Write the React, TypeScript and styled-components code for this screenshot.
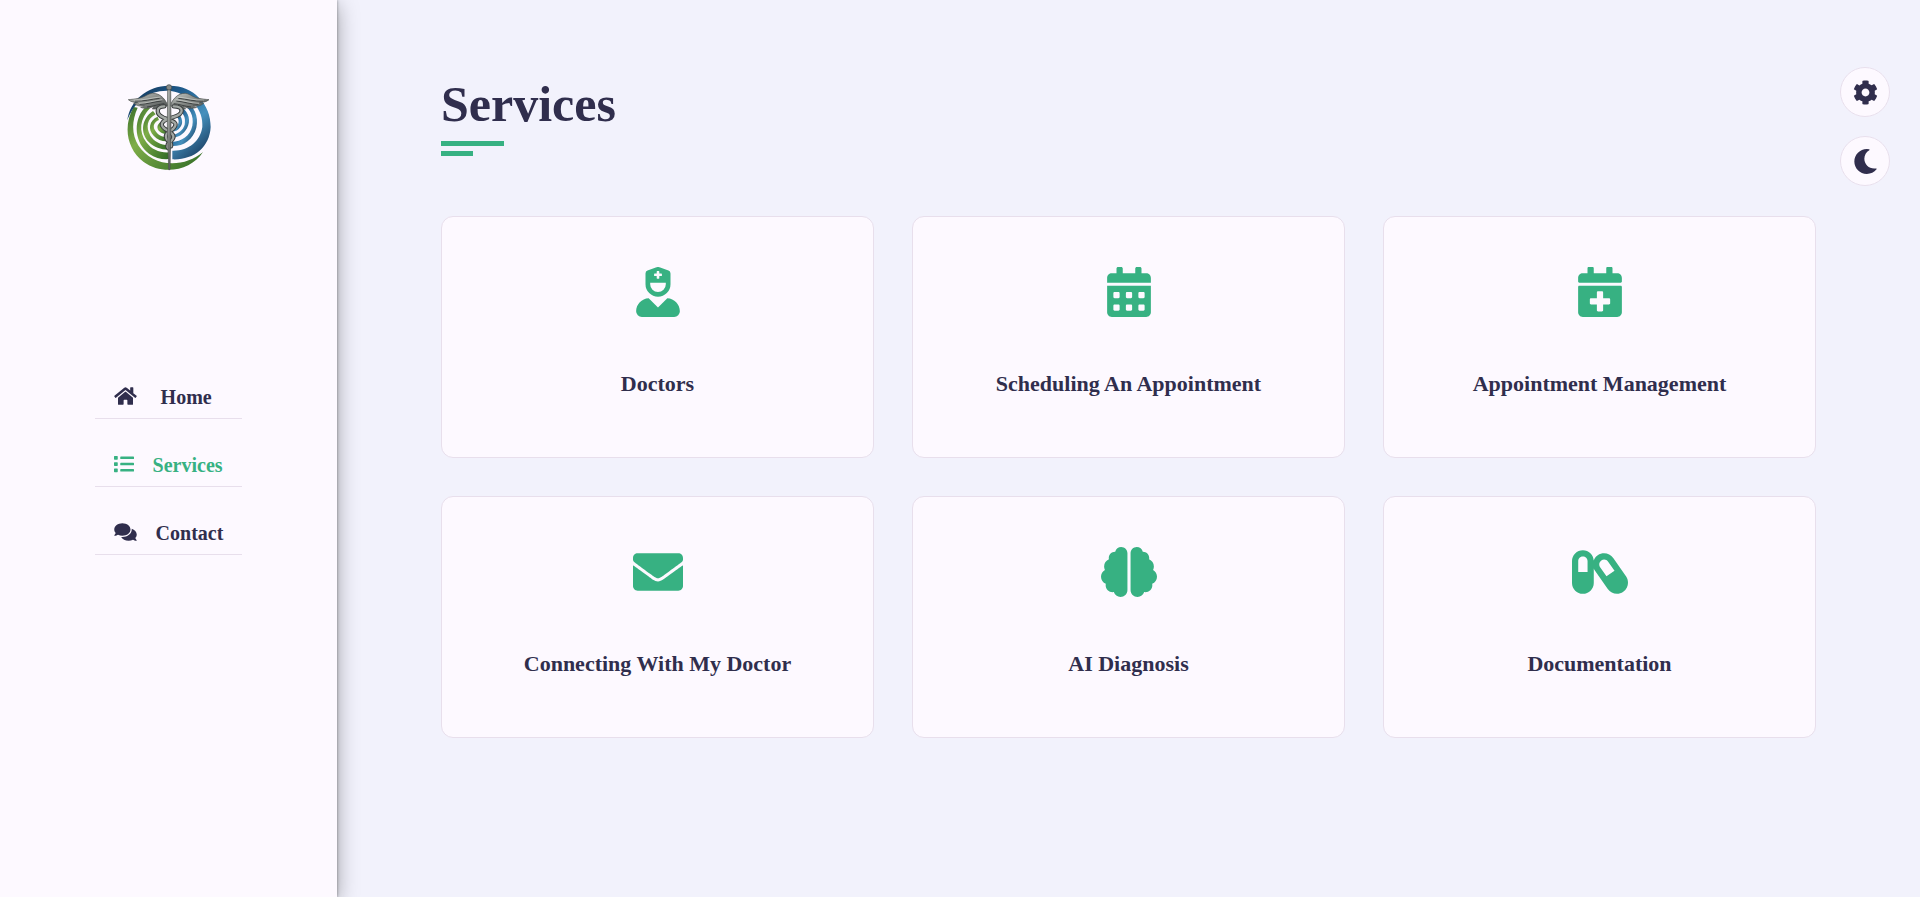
import React from 'react';
import styled, { createGlobalStyle } from 'styled-components';
import {
  FaBrain,
  FaCalendarAlt,
  FaCalendarPlus,
  FaCapsules,
  FaCog,
  FaComments,
  FaEnvelope,
  FaHome,
  FaList,
  FaMoon,
  FaUserNurse,
} from 'react-icons/fa';

const color = {
  page: '#f2f2fc',
  panel: '#fdf9ff',
  line: '#e8dfec',
  text: '#302e4d',
  accent: '#37b182',
};

const GlobalStyle = createGlobalStyle`
  * {
    box-sizing: border-box;
    margin: 0;
    padding: 0;
  }
  body {
    background: ${color.page};
    color: ${color.text};
    font-family: 'Liberation Serif', 'Times New Roman', serif;
  }
`;

const Page = styled.div`
  display: flex;
  min-height: 100vh;
`;

const Sidebar = styled.aside`
  flex: 0 0 337px;
  display: flex;
  flex-direction: column;
  align-items: center;
  gap: 205px;
  padding: 82px 20px 40px;
  background: ${color.panel};
  box-shadow:
    0 0 3px rgba(0, 0, 0, 0.4),
    0 5px 20px rgba(0, 0, 0, 0.35);
`;

const LogoLink = styled.a`
  display: block;
  height: 90px;
`;

const NavList = styled.ul`
  display: flex;
  flex-direction: column;
  gap: 26px;
  list-style: none;
`;

const NavLink = styled.a<{ $active?: boolean; $wide?: boolean }>`
  display: flex;
  align-items: flex-start;
  gap: 19px;
  padding: 9px 19px;
  border-bottom: 1px solid ${color.line};
  color: ${(p) => (p.$active ? color.accent : color.text)};
  font-size: 20px;
  line-height: 23px;
  font-weight: 700;
  text-decoration: none;
  white-space: pre;

  svg {
    height: 20px;
    width: ${(p) => (p.$wide ? 23 : 20)}px;
  }
`;

const Main = styled.main`
  flex: 1;
  min-width: 0;
  padding: 75px 104px 60px;
`;

const Title = styled.h1`
  font-size: 50px;
  line-height: 58px;
  font-weight: 700;
`;

const Underline = styled.div`
  display: flex;
  flex-direction: column;
  gap: 5px;
  margin-top: 8px;
`;

const Bar = styled.span<{ $short?: boolean }>`
  width: ${(p) => (p.$short ? 32 : 63)}px;
  height: 5px;
  background: ${color.accent};
`;

const Grid = styled.section`
  display: grid;
  grid-template-columns: repeat(3, 1fr);
  gap: 38px;
  margin-top: 60px;
`;

const Card = styled.article<{ $wide?: boolean }>`
  display: flex;
  flex-direction: column;
  align-items: center;
  gap: 54px;
  padding: 50px 20px 61px;
  border: 1px solid ${color.line};
  border-radius: 12px;
  background: ${color.panel};
  text-align: center;

  svg {
    height: 50px;
    width: ${(p) => (p.$wide ? 56 : 50)}px;
    color: ${color.accent};
  }
`;

const CardTitle = styled.h2`
  font-size: 22px;
  line-height: 25px;
  font-weight: 700;
`;

const Tools = styled.div`
  position: fixed;
  top: 67px;
  right: 30px;
  display: flex;
  flex-direction: column;
  gap: 19px;
`;

const ToolButton = styled.button`
  display: flex;
  align-items: center;
  justify-content: center;
  width: 50px;
  height: 50px;
  border: 1px solid ${color.line};
  border-radius: 50%;
  background: ${color.panel};
  color: ${color.text};
  font-size: 25px;
  cursor: pointer;
`;

const Logo = () => (
  <svg width="90" height="90" viewBox="43 37 270 270" role="img" aria-label="Clinic logo">
    <defs>
      <linearGradient id="green" x1="0" y1="0" x2="1" y2="1">
        <stop offset="0" stopColor="#3b6f2c" />
        <stop offset="0.35" stopColor="#7fae48" />
        <stop offset="1" stopColor="#2f6a26" />
      </linearGradient>
      <linearGradient id="blue" x1="0" y1="0" x2="1" y2="1">
        <stop offset="0" stopColor="#12304f" />
        <stop offset="0.35" stopColor="#1f5b8c" />
        <stop offset="0.65" stopColor="#4590bd" />
        <stop offset="1" stopColor="#10294a" />
      </linearGradient>
      <linearGradient id="metal" x1="0" y1="0" x2="1" y2="1">
        <stop offset="0" stopColor="#c4c8c3" />
        <stop offset="0.5" stopColor="#858986" />
        <stop offset="1" stopColor="#454949" />
      </linearGradient>
    </defs>
    <g fill="url(#green)">
      <path d="M72 112C40 168 50 238 102 277C160 319 246 302 280 247C240 282 176 292 130 267C76 238 54 180 84 114Z" />
      <path d="M104 116C68 156 76 222 118 252C138 266 158 270 180 268L180 248C150 250 126 240 110 218C86 184 90 148 122 114Z" />
      <path d="M130 124C96 146 90 190 118 218C134 234 156 241 180 240L180 226C154 227 134 216 122 198C108 172 112 148 138 134Z" />
      <path d="M144 141C118 152 114 180 132 198C144 211 160 216 178 214L178 203C158 204 144 196 136 182C128 168 134 157 148 151Z" />
      <path d="M154 157C142 163 140 176 149 185C157 192 166 194 176 192L175 184C162 186 154 176 160 165Z" />
    </g>
    <g fill="url(#blue)">
      <path d="M53 152C60 94 112 47 180 48C252 48 304 104 303 172C300 234 250 272 188 269L188 243C238 244 272 214 278 172C282 122 244 74 184 64C122 58 74 94 53 152Z" />
      <path d="M222 92C254 106 268 142 260 174C250 210 222 230 186 229L186 217C216 215 242 198 248 168C254 138 240 112 214 102Z" />
      <path d="M218 114C238 128 244 154 232 176C222 194 206 204 186 205L186 196C204 194 220 182 225 165C229 144 222 132 208 122Z" />
      <path d="M206 132C219 144 221 160 212 172C206 181 198 186 186 186L186 178C198 176 206 168 207 156C207 148 204 143 198 139Z" />
    </g>
    <g fill="url(#metal)" stroke="#4a4e4c" strokeWidth="2">
      <path d="M171 100C158 74 134 64 112 76C94 87 76 88 56 90C64 97 74 98 84 98C80 100 76 101 72 101C82 110 94 110 104 108C101 111 97 112 93 113C108 119 122 115 134 110L128 118C148 120 164 112 174 108Z" />
      <path d="M185 100C198 74 222 64 242 76C260 87 278 88 298 90C290 97 280 98 270 98C274 100 278 101 282 101C272 110 260 110 250 108C253 111 257 112 261 113C246 119 232 115 220 110L228 118C208 120 192 112 182 108Z" />
    </g>
    <g fill="none" stroke="#3e4242" strokeWidth="3">
      <path d="M76 94C102 96 126 88 150 86M90 104C112 104 134 96 156 94M112 112C132 110 148 103 164 102" />
      <path d="M280 94C254 96 230 88 206 86M266 104C244 104 222 96 200 94M244 112C224 110 208 103 192 102" />
    </g>
    <g fill="none" stroke="#d3d6d2" strokeWidth="2">
      <path d="M72 91C100 93 126 84 152 82M88 101C112 101 134 92 158 90" />
      <path d="M282 91C256 93 230 84 204 82M268 101C244 101 222 92 198 90" />
    </g>
    <g fill="none" stroke="#3b3f3f" strokeWidth="13" strokeLinecap="round">
      <path d="M164 110C138 110 138 134 162 144C188 154 208 158 192 176C178 188 164 192 170 206C174 216 188 218 184 230" />
      <path d="M192 110C226 110 222 134 192 142C162 150 144 162 166 178C188 190 200 200 184 214C172 222 172 230 176 236" />
    </g>
    <g fill="none" stroke="#a3a8a4" strokeWidth="7" strokeLinecap="round">
      <path d="M164 110C138 110 138 134 162 144C188 154 208 158 192 176C178 188 164 192 170 206C174 216 188 218 184 230" />
      <path d="M192 110C226 110 222 134 192 142C162 150 144 162 166 178C188 190 200 200 184 214C172 222 172 230 176 236" />
    </g>
    <path d="M174 58L183 58L184 160L181 300L177 300L173 160Z" fill="url(#metal)" stroke="#4a4e4c" strokeWidth="2" />
    <circle cx="178" cy="53" r="8" fill="#858986" stroke="#3e4242" strokeWidth="2" />
  </svg>
);

const navItems = [
  { label: '\u00a0Home', icon: <FaHome />, wide: true },
  { label: 'Services', icon: <FaList />, active: true },
  { label: 'Contact', icon: <FaComments />, wide: true },
];

const services = [
  { title: 'Doctors', icon: <FaUserNurse /> },
  { title: 'Scheduling An Appointment', icon: <FaCalendarAlt /> },
  { title: 'Appointment Management', icon: <FaCalendarPlus /> },
  { title: 'Connecting With My Doctor', icon: <FaEnvelope /> },
  { title: 'AI Diagnosis', icon: <FaBrain />, wide: true },
  { title: 'Documentation', icon: <FaCapsules />, wide: true },
];

export default function App() {
  return (
    <>
      <GlobalStyle />
      <Page>
        <Sidebar>
          <LogoLink href="#home">
            <Logo />
          </LogoLink>
          <nav aria-label="Main">
            <NavList>
              {navItems.map((item) => (
                <li key={item.label}>
                  <NavLink
                    href={`#${item.label.trim().toLowerCase()}`}
                    $active={item.active}
                    $wide={item.wide}
                    aria-current={item.active ? 'page' : undefined}
                  >
                    {item.icon}
                    <span>{item.label}</span>
                  </NavLink>
                </li>
              ))}
            </NavList>
          </nav>
        </Sidebar>
        <Main>
          <Title>Services</Title>
          <Underline>
            <Bar />
            <Bar $short />
          </Underline>
          <Grid>
            {services.map((service) => (
              <Card key={service.title} $wide={service.wide}>
                {service.icon}
                <CardTitle>{service.title}</CardTitle>
              </Card>
            ))}
          </Grid>
        </Main>
      </Page>
      <Tools>
        <ToolButton type="button" aria-label="Settings">
          <FaCog />
        </ToolButton>
        <ToolButton type="button" aria-label="Dark mode">
          <FaMoon />
        </ToolButton>
      </Tools>
    </>
  );
}
